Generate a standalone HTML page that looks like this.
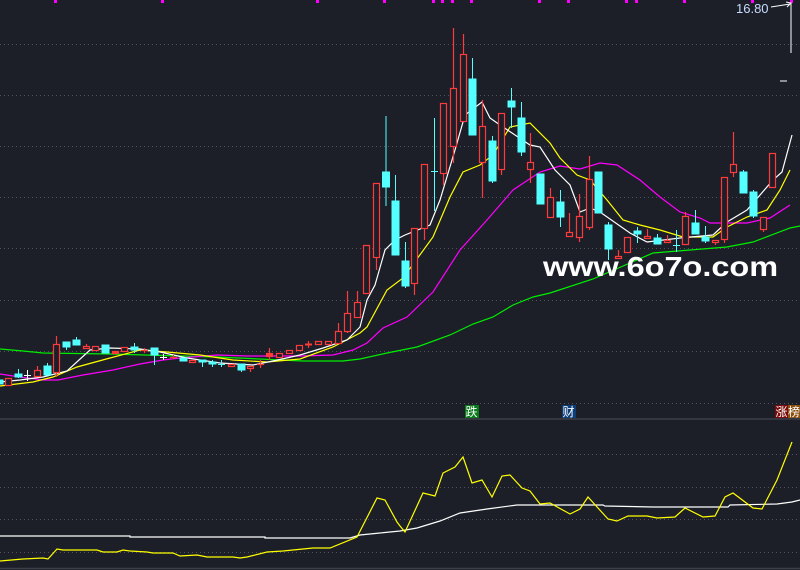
<!DOCTYPE html>
<html><head><meta charset="utf-8"><style>
html,body{margin:0;padding:0;background:#1c1f28;}
svg{display:block}
.t{font-family:"Liberation Sans","Noto Sans CJK SC",sans-serif}
</style></head><body>
<svg width="800" height="570" viewBox="0 0 800 570" xmlns="http://www.w3.org/2000/svg">
<rect width="800" height="570" fill="#1c1f28"/>
<g stroke="#50535b" stroke-width="1" stroke-dasharray="1 3">
<line x1="0" y1="44.5" x2="800" y2="44.5"/><line x1="0" y1="95.5" x2="800" y2="95.5"/>
<line x1="0" y1="146.5" x2="800" y2="146.5"/><line x1="0" y1="197.5" x2="800" y2="197.5"/>
<line x1="0" y1="248.5" x2="800" y2="248.5"/><line x1="0" y1="300.5" x2="800" y2="300.5"/>
<line x1="0" y1="351.5" x2="800" y2="351.5"/><line x1="0" y1="403.5" x2="800" y2="403.5"/>
<line x1="0" y1="454.5" x2="800" y2="454.5"/><line x1="0" y1="487.5" x2="800" y2="487.5"/>
<line x1="0" y1="519.5" x2="800" y2="519.5"/><line x1="0" y1="552.5" x2="800" y2="552.5"/>
</g>
<line x1="0" y1="419" x2="800" y2="419" stroke="#3c3f48" stroke-width="1.5"/>
<line x1="0" y1="568.5" x2="800" y2="568.5" stroke="#3c3f48" stroke-width="1.5"/>
<!-- top markers -->
<g fill="#ff00ff">
<rect x="54" y="0" width="3" height="3"/><rect x="161" y="0" width="3" height="3"/><rect x="316" y="0" width="3" height="3"/><rect x="383" y="0" width="3" height="3"/>
<rect x="432" y="0" width="3" height="3"/><rect x="441" y="0" width="3" height="3"/><rect x="451" y="0" width="3" height="3"/><rect x="470" y="0" width="3" height="3"/>
<rect x="538" y="0" width="3" height="3"/><rect x="567" y="0" width="3" height="3"/><rect x="625" y="0" width="3" height="3"/><rect x="635" y="0" width="3" height="3"/>
<rect x="683" y="0" width="3" height="3"/><rect x="751" y="0" width="3" height="3"/><rect x="790" y="0" width="3" height="3"/>
</g>
<!-- MA lines -->
<g fill="none" stroke-width="1.2">
<polyline stroke="#00ee00" points="0,349 23,351 43,353 110,354 217,357 303,361 343,361 360,359 387,353 417,347 450,335 473,324 493,317 513,305 533,297 550,293 593,279 653,253 727,247 753,242 790,228 800,226"/>
<polyline stroke="#ff00ff" points="0,374 20,377 43,380 58,380 83,375 113,370 140,364 163,360 180,358 217,355 247,356 300,356 333,355 353,350 367,343 383,328 407,317 433,292 460,250 487,220 513,190 540,172 560,166 580,169 600,163 617,165 640,180 660,197 680,212 700,218 710,223 747,223 770,218 790,205"/>
<polyline stroke="#ffff00" points="0,386 33,382 53,377 77,367 110,358 140,350 167,352 200,355 233,360 267,362 300,359 333,347 360,333 367,327 387,290 403,278 433,237 450,197 463,172 480,165 493,155 510,127 530,123 550,143 560,158 577,175 590,180 607,200 623,220 640,225 660,230 683,237 713,237 727,227 747,217 767,210 780,190 790,170"/>
<polyline stroke="#ffffff" points="0,382 20,380 43,377 67,371 90,350 110,348 140,349 160,352 187,358 220,363 253,365 273,361 300,355 323,348 347,340 360,327 367,300 375,285 385,250 395,240 405,235 430,225 440,200 455,150 465,115 482,102 490,118 500,125 515,135 530,145 540,147 555,170 570,185 580,212 590,208 600,212 630,233 647,242 680,238 713,235 727,222 747,210 773,180 782,172 792,135"/>
</g>
<!-- cyan candles -->
<g stroke="#54ffff" fill="#54ffff" stroke-width="1">
<rect x="0" y="380" width="3" height="4"/>
<line x1="18.5" y1="369" x2="18.5" y2="378"/><rect x="15" y="374" width="7" height="3"/>
<line x1="47.5" y1="363" x2="47.5" y2="375"/><rect x="44" y="366" width="7" height="9"/>
<line x1="66.5" y1="342" x2="66.5" y2="350"/><rect x="63" y="342" width="7" height="5"/>
<line x1="76.5" y1="337" x2="76.5" y2="345"/><rect x="73" y="340" width="7" height="5"/>
<rect x="102" y="345" width="7" height="8"/>
<line x1="134.5" y1="343" x2="134.5" y2="353"/><rect x="131" y="347" width="7" height="3"/>
<line x1="154.5" y1="348" x2="154.5" y2="365"/><rect x="151" y="348" width="7" height="7"/>
<rect x="180" y="358" width="7" height="3"/>
<line x1="202.5" y1="360" x2="202.5" y2="367"/><rect x="199" y="360" width="7" height="2"/>
<line x1="212.5" y1="360" x2="212.5" y2="367"/><rect x="209" y="362" width="7" height="2"/>
<line x1="221.5" y1="360" x2="221.5" y2="367"/><line x1="218" y1="364.5" x2="225" y2="364.5"/>
<line x1="241.5" y1="364" x2="241.5" y2="372"/><rect x="238" y="364" width="7" height="6"/>
<line x1="386" y1="116" x2="386" y2="206"/><rect x="382.5" y="172" width="7" height="15"/>
<line x1="395.5" y1="175" x2="395.5" y2="255"/><rect x="392" y="201" width="7" height="54"/>
<line x1="405.5" y1="242" x2="405.5" y2="288"/><rect x="402" y="261" width="7" height="25"/>
<line x1="434.5" y1="118" x2="434.5" y2="211"/><line x1="431" y1="171.5" x2="438" y2="171.5"/>
<line x1="472.5" y1="58" x2="472.5" y2="135"/><rect x="469" y="79" width="7" height="56"/>
<line x1="492.5" y1="136" x2="492.5" y2="183"/><rect x="489" y="141" width="7" height="40"/>
<line x1="511.5" y1="88" x2="511.5" y2="128"/><rect x="508" y="101" width="7" height="6"/>
<line x1="521.5" y1="102" x2="521.5" y2="156"/><rect x="518" y="118" width="7" height="34"/>
<rect x="537" y="174" width="7" height="30"/>
<line x1="560.5" y1="190" x2="560.5" y2="227"/><rect x="557" y="202" width="7" height="15"/>
<rect x="595" y="172" width="7" height="41"/>
<line x1="608.5" y1="222" x2="608.5" y2="260"/><rect x="605" y="225" width="7" height="24"/>
<line x1="637.5" y1="227" x2="637.5" y2="243"/><rect x="634" y="231" width="7" height="3"/>
<line x1="657.5" y1="234" x2="657.5" y2="244"/><rect x="654" y="238" width="7" height="6"/>
<line x1="676.5" y1="230" x2="676.5" y2="252"/><line x1="673" y1="245.5" x2="680" y2="245.5"/>
<line x1="695.5" y1="210" x2="695.5" y2="234"/><rect x="692" y="223" width="7" height="11"/>
<line x1="705.5" y1="226" x2="705.5" y2="243"/><rect x="702" y="237" width="7" height="4"/>
<line x1="743.5" y1="170" x2="743.5" y2="193"/><rect x="740" y="172" width="7" height="21"/>
<line x1="753.5" y1="190" x2="753.5" y2="218"/><rect x="750" y="192" width="7" height="24"/>
</g>
<!-- white doji -->
<g stroke="#ffffff" stroke-width="1">
<line x1="27.5" y1="370" x2="27.5" y2="381"/><line x1="24" y1="375.5" x2="31" y2="375.5"/>
<line x1="163.5" y1="354" x2="163.5" y2="360"/><line x1="160" y1="357.5" x2="167" y2="357.5"/>
</g>
<!-- red candles -->
<g stroke="#ff3a3a" fill="#1c1f28" stroke-width="1.2">
<rect x="5.5" y="378.5" width="6" height="7"/>
<line x1="37.5" y1="366" x2="37.5" y2="370"/><rect x="34.5" y="370.5" width="6" height="6"/>
<line x1="56.5" y1="336" x2="56.5" y2="377"/><rect x="53.5" y="344.5" width="6" height="28"/>
<line x1="86.5" y1="344" x2="86.5" y2="349"/><rect x="83.5" y="346.5" width="6" height="2"/>
<rect x="92.5" y="346.5" width="6" height="4"/>
<rect x="112.5" y="351.5" width="6" height="2" fill="#ff3a3a"/>
<rect x="121.5" y="347.5" width="6" height="4"/>
<line x1="144.5" y1="348" x2="144.5" y2="353"/><line x1="141" y1="350.5" x2="148" y2="350.5"/>
<line x1="173.5" y1="355" x2="173.5" y2="359"/><line x1="170" y1="357.5" x2="177" y2="357.5"/>
<rect x="189.5" y="360.5" width="6" height="2"/>
<rect x="228.5" y="364.5" width="6" height="2"/>
<line x1="250.5" y1="366" x2="250.5" y2="372"/><rect x="247.5" y="366.5" width="6" height="2"/>
<line x1="260.5" y1="360" x2="260.5" y2="368"/><line x1="257" y1="364.5" x2="264" y2="364.5"/>
<line x1="269.5" y1="348" x2="269.5" y2="360"/><rect x="266.5" y="353.5" width="6" height="3" fill="#ff3a3a"/>
<rect x="276.5" y="353.5" width="6" height="4"/>
<rect x="286.5" y="350.5" width="6" height="3"/>
<rect x="296.5" y="345.5" width="6" height="5"/>
<line x1="308.5" y1="341" x2="308.5" y2="348"/><line x1="305" y1="344.5" x2="312" y2="344.5" stroke-width="2"/>
<rect x="315.5" y="341.5" width="6" height="3"/>
<rect x="325.5" y="341.5" width="6" height="3"/>
<line x1="338.5" y1="323" x2="338.5" y2="331"/><rect x="335.5" y="331.5" width="6" height="12"/>
<line x1="347.5" y1="291" x2="347.5" y2="333"/><rect x="344.5" y="313.5" width="6" height="18"/>
<line x1="357.5" y1="291" x2="357.5" y2="302"/><rect x="354.5" y="302.5" width="6" height="15"/>
<rect x="363.5" y="245.5" width="6" height="48"/>
<line x1="376.5" y1="257" x2="376.5" y2="270"/><rect x="373.5" y="183.5" width="6" height="74"/>
<line x1="414.5" y1="283" x2="414.5" y2="295"/><rect x="411.5" y="228.5" width="6" height="55"/>
<line x1="424.5" y1="228" x2="424.5" y2="240"/><rect x="421.5" y="164.5" width="6" height="64"/>
<line x1="443.5" y1="173" x2="443.5" y2="185"/><rect x="440.5" y="103.5" width="6" height="70"/>
<line x1="453.5" y1="28" x2="453.5" y2="163"/><rect x="450.5" y="88.5" width="6" height="58"/>
<line x1="463.5" y1="34" x2="463.5" y2="54"/><rect x="460.5" y="54.5" width="6" height="67"/>
<line x1="482.5" y1="100" x2="482.5" y2="198"/><rect x="479.5" y="126.5" width="6" height="36"/>
<line x1="501.5" y1="169" x2="501.5" y2="175"/><rect x="498.5" y="113.5" width="6" height="56"/>
<line x1="530.5" y1="133" x2="530.5" y2="183"/><rect x="527.5" y="162.5" width="6" height="7"/>
<line x1="550.5" y1="188" x2="550.5" y2="197"/><rect x="547.5" y="197.5" width="6" height="20"/>
<line x1="569.5" y1="213" x2="569.5" y2="232"/><rect x="566.5" y="232.5" width="6" height="4"/>
<line x1="579.5" y1="194" x2="579.5" y2="242"/><rect x="576.5" y="216.5" width="6" height="21"/>
<line x1="589.5" y1="156" x2="589.5" y2="230"/><rect x="586.5" y="179.5" width="6" height="48"/>
<line x1="618.5" y1="250" x2="618.5" y2="256"/><rect x="615.5" y="256.5" width="6" height="2"/>
<rect x="624.5" y="237.5" width="6" height="15"/>
<line x1="647.5" y1="229" x2="647.5" y2="236"/><rect x="644.5" y="236.5" width="6" height="2"/>
<line x1="667.5" y1="235" x2="667.5" y2="240"/><rect x="664.5" y="240.5" width="6" height="2"/>
<line x1="685.5" y1="212" x2="685.5" y2="216"/><rect x="682.5" y="216.5" width="6" height="28"/>
<line x1="715.5" y1="242" x2="715.5" y2="245"/><rect x="712.5" y="240.5" width="6" height="2"/>
<line x1="724.5" y1="239" x2="724.5" y2="243"/><rect x="721.5" y="177.5" width="6" height="62"/>
<line x1="733.5" y1="132" x2="733.5" y2="177"/><rect x="730.5" y="164.5" width="6" height="8"/>
<line x1="763.5" y1="229" x2="763.5" y2="232"/><rect x="760.5" y="217.5" width="6" height="12"/>
<rect x="769.5" y="153.5" width="6" height="34"/>
</g>
<!-- price marker -->
<line x1="791" y1="3" x2="791" y2="53" stroke="#fff" stroke-width="1"/>
<polyline points="771,7 790,4" stroke="#fff" fill="none"/>
<polyline points="786,2 791,3 787,7" stroke="#fff" fill="none"/>
<line x1="780" y1="81" x2="787" y2="81" stroke="#fff"/>
<text x="736" y="13" class="t" font-size="13" fill="#c8dcff">16.80</text>
<!-- watermark -->
<text x="543" y="276" class="t" font-size="28" font-weight="bold" fill="#ffffff" transform="translate(543 0) scale(1.16 1) translate(-543 0)">www.6o7o.com</text>
<!-- labels -->
<rect x="465" y="405" width="14" height="13" fill="#0a7a1a"/>
<text x="465.5" y="416" class="t" font-size="12" fill="#fff">跌</text>
<rect x="562" y="405" width="14" height="13" fill="#0e3e78"/>
<text x="562.5" y="416" class="t" font-size="12" fill="#fff">财</text>
<rect x="775" y="405" width="13" height="13" fill="#7a0a0a"/>
<text x="775.5" y="416" class="t" font-size="12" fill="#fff">涨</text>
<rect x="788" y="405" width="12" height="13" fill="#8a5010"/>
<text x="788" y="416" class="t" font-size="12" fill="#fff">榜</text>
<!-- lower panel -->
<g fill="none" stroke-width="1.2">
<polyline stroke="#ffffff" points="0,536 130,536 130,537 265,537 265,538 350,538 360,535 380,533 400,531 417,528 440,521 460,513 487,509 517,505 603,505 605,506 653,507 728,507 730,505 777,504 792,502 800,500"/>
<polyline stroke="#ffff00" points="0,561 23,559 43,558 48,559 57,549 63,550 97,550 103,552 117,552 123,550 130,551 147,552 153,553 173,553 180,556 197,555 207,557 233,557 240,558 247,557 267,552 283,551 313,548 330,548 357,537 377,498 385,500 397,522 400,526 405,532 423,493 435,496 443,473 455,467 463,457 472,483 482,480 492,497 502,476 510,475 522,488 530,491 540,504 550,503 570,514 580,509 588,497 608,519 617,521 628,516 647,516 657,518 675,517 685,508 703,517 715,516 725,497 733,493 753,508 762,509 777,480 792,442"/>
</g>
</svg>
</body></html>
